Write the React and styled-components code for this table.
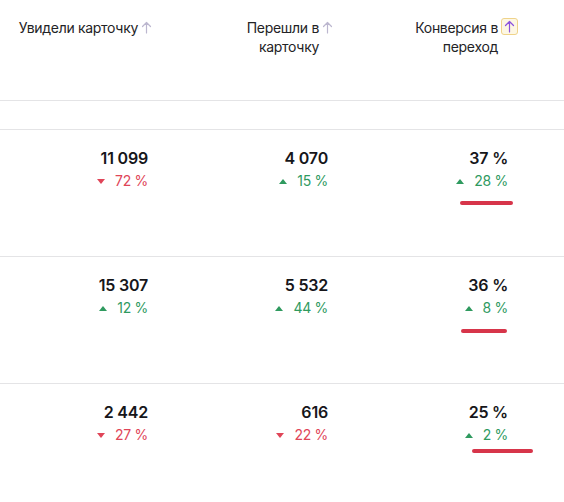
import React from 'react'
import styled, { createGlobalStyle } from 'styled-components'

const GlobalStyle = createGlobalStyle`
    body {
        margin: 0;
        background: #ffffff;
        font-family: Inter, "Noto Sans", sans-serif;
        color: #1b1b1f;
    }
`

const Table = styled.div`
    display: flex;
    flex-direction: column;
    width: 564px;
    overflow: hidden;
`

const Row = styled.div`
    display: grid;
    grid-template-columns: 164px 180px 182px 1fr;
    height: ${props => props.height}px;
    border-bottom: 1px solid #e4e4e6;
`

const HeadCell = styled.div`
    display: flex;
    justify-content: flex-end;
    align-items: flex-start;
    gap: 3px;
    padding: 18px ${props => props.pr}px 0 0;
    font-size: 14px;
    line-height: 19px;
    letter-spacing: -0.3px;
    color: #232326;
`

const HeadText = styled.span`
    text-align: right;
    max-width: ${props => props.max}px;
`

const SortBtn = styled.span`
    display: flex;
    align-items: center;
    justify-content: center;
    width: ${props => props.active ? 17 : 11}px;
    height: ${props => props.active ? 17 : 14}px;
    margin-top: ${props => props.active ? 0 : 2}px;
    border: ${props => props.active ? '1px solid #efd38a' : 'none'};
    border-radius: 3px;
    background: ${props => props.active ? '#fdf7e4' : 'transparent'};
    box-sizing: border-box;
`

const DataCell = styled.div`
    position: relative;
    display: flex;
    flex-direction: column;
    align-items: flex-end;
    padding: 18px ${props => props.pr}px 0 0;
`

const Value = styled.div`
    font-size: 16px;
    font-weight: 600;
    line-height: 20px;
    color: #16161a;
    letter-spacing: -0.2px;
`

const Delta = styled.div`
    display: flex;
    align-items: center;
    gap: 10px;
    margin-top: 3px;
    font-size: 14px;
    line-height: 20px;
    letter-spacing: -0.3px;
    color: ${props => props.up ? '#2f9a5f' : '#e04558'};
`

const Mark = styled.div`
    position: absolute;
    height: 4px;
    border-radius: 2px;
    background: #d7354a;
`

const Arrow = ({ color }) => (
    <svg width="11" height="13" viewBox="0 0 11 13" fill="none">
        <path d="M5.5 12V1.5M1.5 5.5L5.5 1.5L9.5 5.5" stroke={color} strokeWidth="1.2" strokeLinecap="round" strokeLinejoin="round" />
    </svg>
)

const Triangle = ({ up }) => (
    <svg width="8" height="5" viewBox="0 0 8 5">
        <path d={up ? 'M0 5L4 0L8 5Z' : 'M0 0L8 0L4 5Z'} fill="currentColor" />
    </svg>
)

const padRight = [16, 16, 18]

const rows = [
    {
        cells: [
            { value: '11 099', delta: '72 %', up: false },
            { value: '4 070', delta: '15 %', up: true },
            { value: '37 %', delta: '28 %', up: true, mark: { left: 116, top: 71, width: 53 } },
        ],
    },
    {
        cells: [
            { value: '15 307', delta: '12 %', up: true },
            { value: '5 532', delta: '44 %', up: true },
            { value: '36 %', delta: '8 %', up: true, mark: { left: 117, top: 72, width: 46 } },
        ],
    },
    {
        cells: [
            { value: '2 442', delta: '27 %', up: false },
            { value: '616', delta: '22 %', up: false },
            { value: '25 %', delta: '2 %', up: true, mark: { left: 128, top: 65, width: 61 } },
        ],
    },
]

export default function App() {
    return (
        <>
            <GlobalStyle />
            <Table>
                <Row height={100}>
                    <HeadCell pr={12}>
                        <HeadText max={140}>Увидели карточку</HeadText>
                        <SortBtn><Arrow color="#bcb7cf" /></SortBtn>
                    </HeadCell>
                    <HeadCell pr={11}>
                        <HeadText max={75}>Перешли в карточку</HeadText>
                        <SortBtn><Arrow color="#bcb7cf" /></SortBtn>
                    </HeadCell>
                    <HeadCell pr={8}>
                        <HeadText max={90}>Конверсия в переход</HeadText>
                        <SortBtn active><Arrow color="#8a52de" /></SortBtn>
                    </HeadCell>
                    <div />
                </Row>
                <Row height={28} />
                {rows.map((row, i) => (
                    <Row key={i} height={126}>
                        {row.cells.map((c, j) => (
                            <DataCell key={j} pr={padRight[j]}>
                                <Value>{c.value}</Value>
                                <Delta up={c.up}>
                                    <Triangle up={c.up} />
                                    <span>{c.delta}</span>
                                </Delta>
                                {c.mark && (
                                    <Mark style={{ left: c.mark.left, top: c.mark.top, width: c.mark.width }} />
                                )}
                            </DataCell>
                        ))}
                        <div />
                    </Row>
                ))}
            </Table>
        </>
    )
}
